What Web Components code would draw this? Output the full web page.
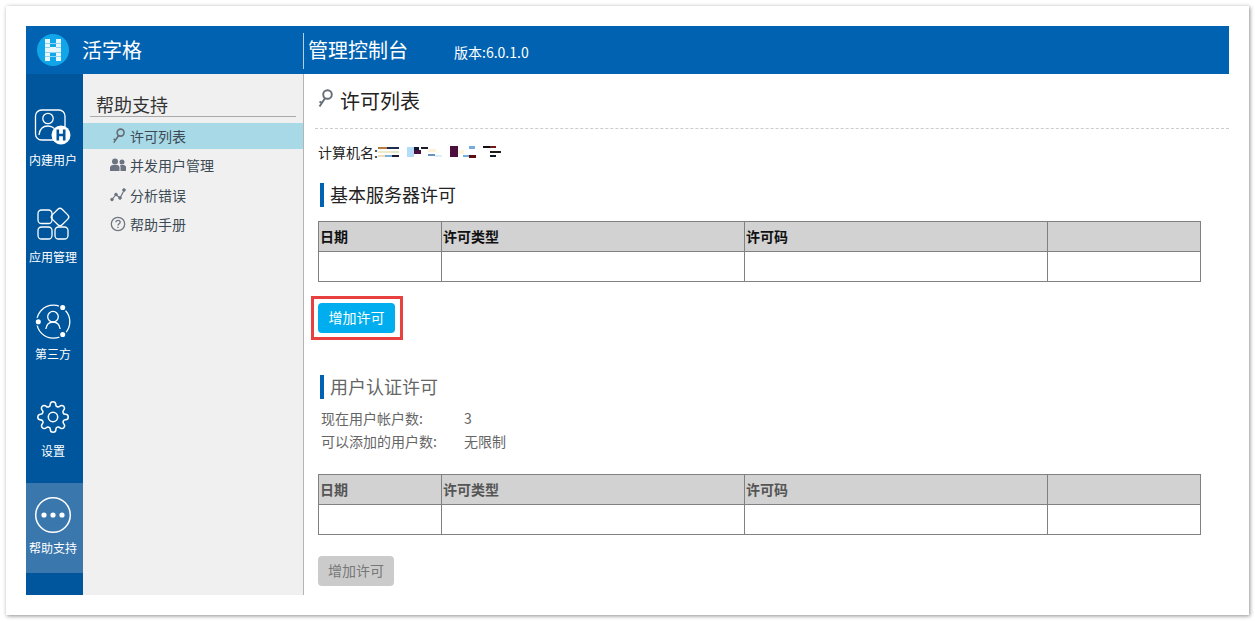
<!DOCTYPE html>
<html lang="zh-CN">
<head>
<meta charset="utf-8">
<title>管理控制台</title>
<style>
    html, body { margin: 0; background: #fff; }
    body { font-family: "Noto Sans CJK SC", "Liberation Sans", sans-serif; }
</style>
</head>
<body>
<console-page>
    <app-header slot="header" product="活字格" title="管理控制台" version="版本:6.0.1.0"></app-header>
    <rail-nav slot="rail">
        <rail-item label="内建用户">
            <svg viewBox="0 0 36 36" fill="none" stroke="#fff" stroke-width="1.3">
                <rect x="0.5" y="2" width="29.5" height="30" rx="6"/>
                <circle cx="13" cy="10.5" r="5.2"/>
                <path d="M4 27c.6-6 4.400-9 9-9 2.500 0 4.600.8 6.200 2.400"/>
                <circle cx="26" cy="27" r="9.500" fill="#fff" stroke="none"/>
                <path d="M22.800 21.500v11M29.200 21.500v11M22.800 27h6.400" stroke="#00569c" stroke-width="2.600"/>
            </svg>
        </rail-item>
        <rail-item label="应用管理">
            <svg viewBox="0 0 36 36" fill="none" stroke="#fff" stroke-width="1.300">
                <rect x="3" y="5" width="14" height="13.500" rx="3.500"/>
                <rect x="18" y="5" width="14" height="14" rx="3" transform="rotate(45 25 12)"/>
                <rect x="3" y="22" width="14" height="12" rx="3.500"/>
                <rect x="20" y="22" width="13" height="12" rx="3.500"/>
            </svg>
        </rail-item>
        <rail-item label="第三方">
            <svg viewBox="0 0 36 36" fill="none" stroke="#fff" stroke-width="1.300">
                <circle cx="18.300" cy="19.700" r="16.500"/>
                <circle cx="18" cy="14.700" r="5.300"/>
                <path d="M10.800 27c.8-5 3.800-7 7.200-7s6.400 2 7.200 7"/>
                <g fill="#fff" stroke="#00569c" stroke-width="1.500">
                    <circle cx="27.700" cy="5.500" r="3.300"/>
                    <circle cx="3.300" cy="19.700" r="3.300"/>
                    <circle cx="27.700" cy="32.500" r="3.300"/>
                </g>
            </svg>
        </rail-item>
        <rail-item label="设置">
            <svg viewBox="-1 -1 26 26" fill="none" stroke="#fff" stroke-width="1.100" style="width:36px;height:36px">
                <circle cx="12" cy="12" r="3.400"/>
                <path d="M19.400 15a1.650 1.650 0 0 0 .33 1.820l.06.06a2 2 0 0 1 0 2.830 2 2 0 0 1-2.830 0l-.06-.06a1.650 1.650 0 0 0-1.820-.33 1.650 1.650 0 0 0-1 1.510V21a2 2 0 0 1-2 2 2 2 0 0 1-2-2v-.09A1.650 1.650 0 0 0 9 19.400a1.650 1.650 0 0 0-1.820.33l-.06.06a2 2 0 0 1-2.830 0 2 2 0 0 1 0-2.830l.06-.06a1.650 1.650 0 0 0 .33-1.820 1.650 1.650 0 0 0-1.510-1H3a2 2 0 0 1-2-2 2 2 0 0 1 2-2h.09A1.650 1.650 0 0 0 4.600 9a1.650 1.650 0 0 0-.33-1.820l-.06-.06a2 2 0 0 1 0-2.830 2 2 0 0 1 2.830 0l.06.06a1.650 1.650 0 0 0 1.820.33H9a1.650 1.650 0 0 0 1-1.510V3a2 2 0 0 1 2-2 2 2 0 0 1 2 2v.09a1.650 1.650 0 0 0 1 1.510 1.650 1.650 0 0 0 1.820-.33l.06-.06a2 2 0 0 1 2.830 0 2 2 0 0 1 0 2.830l-.06.06a1.650 1.650 0 0 0-.33 1.820V9a1.650 1.650 0 0 0 1.510 1H21a2 2 0 0 1 2 2 2 2 0 0 1-2 2h-.09a1.650 1.650 0 0 0-1.510 1z"/>
            </svg>
        </rail-item>
        <rail-item label="帮助支持" active>
            <svg viewBox="0 0 36 36" fill="none" stroke="#fff" stroke-width="1.500">
                <circle cx="18" cy="19" r="17.300"/>
                <g fill="#fff" stroke="none">
                    <circle cx="9" cy="19" r="2.600"/>
                    <circle cx="18" cy="19" r="2.600"/>
                    <circle cx="27" cy="19" r="2.600"/>
                </g>
            </svg>
        </rail-item>
    </rail-nav>
    <side-nav slot="side" heading="帮助支持">
        <nav-item active>
            <svg slot="icon" viewBox="0 0 16 16" fill="none" stroke="#656c76" stroke-width="1.600"><circle cx="10.600" cy="4.600" r="3.500"/><path d="M8.600 7.500 3.800 14.600M5.600 12l-2-1"/></svg>
            许可列表
        </nav-item>
        <nav-item>
            <svg slot="icon" viewBox="0 0 16 16" fill="#6b7480"><circle cx="5" cy="4.500" r="3"/><circle cx="12" cy="5" r="2.500"/><path d="M0 14v-3.500C0 9 1.500 8 3 8h4c1.500 0 2.500 1 2.500 2.500V14zM10.500 14v-4c0-.6-.2-1.200-.5-1.600.4-.2.800-.4 1.500-.4h2C15 8 16 9 16 10v4z"/></svg>
            并发用户管理
        </nav-item>
        <nav-item>
            <svg slot="icon" viewBox="0 0 16 16" fill="#6b7480" stroke="#6b7480"><path d="M2 12.500 6 7.500 10 11 14 3.500" fill="none" stroke-width="1.200"/><circle cx="2" cy="12.500" r="1.300"/><circle cx="6" cy="7.500" r="1.300"/><circle cx="10" cy="11" r="1.300"/><circle cx="14" cy="3" r="1.300"/></svg>
            分析错误
        </nav-item>
        <nav-item>
            <svg slot="icon" viewBox="0 0 16 16" fill="none" stroke="#6f7680" stroke-width="1.300"><circle cx="8" cy="8" r="6.700"/><path d="M5.900 6.300C6 4.900 7 4.300 8.100 4.300c1.200 0 2.100.8 2.100 1.900 0 1.600-2.200 1.700-2.200 3.400"/><path d="M8 10.800v1.300"/></svg>
            帮助手册
        </nav-item>
    </side-nav>
    <license-panel slot="main" heading="许可列表" machine="计算机名:">
        <section-title>基本服务器许可</section-title>
        <license-table></license-table>
        <callout-box><action-button>增加许可</action-button></callout-box>
        <section-title muted class="second">用户认证许可</section-title>
        <stat-list>
            <stat-row label="现在用户帐户数:">3</stat-row>
            <stat-row label="可以添加的用户数:">无限制</stat-row>
        </stat-list>
        <license-table muted class="second"></license-table>
        <action-button disabled class="last">增加许可</action-button>
    </license-panel>
</console-page>

<script>
class BaseElement extends HTMLElement {
    constructor() {
        super();
        this.attachShadow({mode: "open"});
    }
    connectedCallback() {
        this.shadowRoot.innerHTML = `<style>${this.getStyles()}</style>${this.getMarkup()}`;
    }
    getStyles() { return ""; }
    getMarkup() { return "<slot></slot>"; }
}

class ConsolePage extends BaseElement {
    getStyles() {
        return `
            :host {
                display: block;
                box-sizing: border-box;
                width: 1243px;
                height: 609px;
                margin: 6px;
                padding: 20px;
                background: #fff;
                box-shadow: 1px 1px 4px rgba(0,0,0,.45);
                font-family: "Noto Sans CJK SC", "Liberation Sans", sans-serif;
            }
            .app { height: 569px; display: flex; flex-direction: column; overflow: hidden; }
            .body { flex: 1; display: flex; min-height: 0; }
        `;
    }
    getMarkup() {
        return `
            <div class="app">
                <slot name="header"></slot>
                <div class="body">
                    <slot name="rail"></slot>
                    <slot name="side"></slot>
                    <slot name="main"></slot>
                </div>
            </div>
        `;
    }
}

class AppHeader extends BaseElement {
    getStyles() {
        return `
            :host { display: flex; align-items: center; height: 48px; flex: none; background: #0062b1; color: #fff; }
            .logo { width: 32px; height: 32px; margin-left: 11px; flex: none; display: block; }
            .product { width: 221px; margin-left: 13px; font-size: 20px; line-height: 28px; box-sizing: border-box; }
            .title { height: 36px; line-height: 33px; border-left: 1px solid #b5cfe6; padding-left: 4px; font-size: 20px; margin-top: 2px; }
            .version { margin-left: 46px; font-size: 14px; margin-top: 4px; }
        `;
    }
    getMarkup() {
        return `
            <svg class="logo" viewBox="0 0 32 32">
                <circle cx="16" cy="16" r="16" fill="#10a6e8"/>
                <g fill="#e8f6fd">
                    <rect x="8" y="5" width="5" height="22"/>
                    <rect x="19" y="5" width="5" height="22"/>
                    <rect x="13" y="13" width="6" height="6"/>
                </g>
                <g fill="#8fd3f4">
                    <rect x="8" y="9" width="16" height="1"/>
                    <rect x="8" y="13" width="5" height="1"/>
                    <rect x="19" y="13" width="5" height="1"/>
                    <rect x="8" y="18" width="16" height="1"/>
                    <rect x="8" y="22" width="16" height="1"/>
                </g>
            </svg>
            <div class="product">${this.getAttribute("product")}</div>
            <div class="title">${this.getAttribute("title")}</div>
            <div class="version">${this.getAttribute("version")}</div>
        `;
    }
}

class RailNav extends BaseElement {
    getStyles() {
        return `:host { display: flex; flex-direction: column; gap: 7px; width: 57px; flex: none; box-sizing: border-box; padding-top: 21px; background: #00569c; }`;
    }
}

class RailItem extends BaseElement {
    getStyles() {
        return `
            :host {
                display: flex; flex-direction: column; align-items: center;
                box-sizing: border-box; height: 90px; padding: 13px 3px 0 0;
                color: #fff; font-size: 12px;
            }
            :host([active]) { background: #3a77ac; }
            ::slotted(svg) { display: block; width: 36px; height: 36px; overflow: visible; }
            .icon { width: 36px; height: 36px; }
            .label { margin-top: 8px; line-height: 16px; white-space: nowrap; }
        `;
    }
    getMarkup() {
        return `<div class="icon"><slot></slot></div><div class="label">${this.getAttribute("label")}</div>`;
    }
}

class SideNav extends BaseElement {
    getStyles() {
        return `
            :host { display: block; box-sizing: border-box; width: 221px; flex: none; padding-top: 18px; background: #f0f0f0; border-right: 1px solid #b4b4b4; color: #333; }
            .heading { margin: 0 7px; padding-left: 6px; height: 24px; line-height: 25px; font-size: 18px; border-bottom: 1px solid #aaa; }
            .list { margin-top: 6px; display: flex; flex-direction: column; gap: 3.6px; }
        `;
    }
    getMarkup() {
        return `<div class="heading">${this.getAttribute("heading")}</div><div class="list"><slot></slot></div>`;
    }
}

class NavItem extends BaseElement {
    getStyles() {
        return `
            :host { display: flex; align-items: center; box-sizing: border-box; height: 26px; padding: 0 0 1px 27px; font-size: 14px; color: #3c4a55; white-space: nowrap; }
            :host([active]) { background: #a8d9e7; }
            ::slotted(svg) { display: block; width: 16px; height: 16px; }
            .icon { width: 16px; height: 16px; margin-right: 4px; }
        `;
    }
    getMarkup() {
        return `<div class="icon"><slot name="icon"></slot></div><slot></slot>`;
    }
}

class LicensePanel extends BaseElement {
    getStyles() {
        return `
            :host { display: block; flex: 1; min-width: 0; padding-left: 11px; background: #fff; color: #222; }
            .head { display: flex; align-items: center; height: 54px; border-bottom: 1px dashed #ccc; box-sizing: content-box; padding-left: 2px; font-size: 20px; }
            .head svg { width: 16px; height: 20px; margin-right: 7px; margin-top: -5px; }
            .head span { margin-top: -1px; }
            .machine { display: flex; align-items: center; height: 20px; margin: 13px 0 21px 3px; font-size: 14px; }
            .machine svg { width: 124px; height: 12px; display: block; }
            .inner { padding-left: 3px; }
        `;
    }
    getMarkup() {
        return `
            <div class="head">
                <svg viewBox="0 0 16 20" fill="none" stroke="#656c76" stroke-width="1.900"><circle cx="10.500" cy="5.500" r="4.300"/><path d="M8.200 9 2.500 17.500M5 14l-2.500-1.300"/></svg>
                <span>${this.getAttribute("heading")}</span>
            </div>
            <div class="machine">
                <span>${this.getAttribute("machine")}</span>
                <svg viewBox="0 0 124 12" shape-rendering="crispEdges">
                    <rect x="0" y="1" width="9" height="2" fill="#b87a3a"/><rect x="9" y="1" width="12" height="2" fill="#1c2b52"/>
                    <rect x="0" y="5" width="13" height="2" fill="#f2e8c8"/><rect x="13" y="5" width="8" height="2" fill="#dfe8c0"/>
                    <rect x="0" y="9" width="7" height="2" fill="#f0dcb8"/><rect x="7" y="9" width="7" height="2" fill="#7ab0dc"/><rect x="14" y="9" width="7" height="2" fill="#1c1c2e"/>
                    <rect x="29" y="1" width="7" height="10" fill="#b4dcf8"/><rect x="36" y="1" width="5" height="3" fill="#101830"/><rect x="36" y="4" width="7" height="4" fill="#4a1040"/>
                    <rect x="43" y="1" width="7" height="2" fill="#1c1c28"/><rect x="50" y="3" width="8" height="3" fill="#fbf2d8"/><rect x="50" y="8" width="7" height="2" fill="#6a90c0"/>
                    <rect x="57" y="9" width="7" height="2" fill="#d8f0fa"/>
                    <rect x="72" y="0" width="8" height="11" fill="#4a0f3c"/>
                    <rect x="80" y="4" width="6" height="4" fill="#fdf5dc"/><rect x="85" y="9" width="6" height="2" fill="#74acdc"/><rect x="91" y="0" width="6" height="3" fill="#74acdc"/><rect x="91" y="9" width="7" height="3" fill="#5a1010"/>
                    <rect x="105" y="0" width="7" height="2" fill="#101010"/><rect x="112" y="0" width="6" height="2" fill="#701818"/><rect x="112" y="5" width="11" height="2" fill="#1c1c1c"/><rect x="112" y="9" width="6" height="2" fill="#101828"/>
                </svg>
            </div>
            <div class="inner"><slot></slot></div>
        `;
    }
}

class SectionTitle extends BaseElement {
    getStyles() {
        return `
            :host { display: block; margin-left: 2px; height: 24px; padding-left: 6px; border-left: 4px solid #0062b1; font-size: 18px; line-height: 22px; color: #222; }
            :host([muted]) { color: #666; }
            :host(.second) { margin-top: 35px; }
        `;
    }
}

class LicenseTable extends BaseElement {
    getStyles() {
        return `
            :host { display: block; width: 883px; margin-top: 14px; color: #111; }
            :host([muted]) { color: #555; }
            :host(.second) { margin-top: 21px; }
            table { border-collapse: collapse; table-layout: fixed; width: 883px; font-size: 14px; }
            th, td { border: 1px solid #808080; height: 27px; line-height: 18px; padding: 0 1px 2px; text-align: left; box-sizing: content-box; }
            th { background: #d2d2d2; font-weight: 700; }
        `;
    }
    getMarkup() {
        return `
            <table>
                <colgroup><col style="width:123px"><col style="width:303px"><col style="width:303px"><col style="width:153px"></colgroup>
                <tr><th>日期</th><th>许可类型</th><th>许可码</th><th></th></tr>
                <tr><td></td><td></td><td></td><td></td></tr>
            </table>
        `;
    }
}

class CalloutBox extends BaseElement {
    getStyles() {
        return `:host { display: block; width: fit-content; margin: 14px 0 0 -7px; padding: 4px 5px 4px 4px; border: 3px solid #e8403f; }`;
    }
}

class ActionButton extends BaseElement {
    getStyles() {
        return `
            :host { display: flex; align-items: center; justify-content: center; box-sizing: border-box; width: 77px; height: 30px; padding-bottom: 2px; border-radius: 4px; background: #00aeef; color: #fff; font-size: 14px; }
            :host([disabled]) { width: 76px; background: #cbcbcb; color: #777; }
            :host(.last) { margin-top: 21px; }
        `;
    }
}

class StatList extends BaseElement {
    getStyles() {
        return `:host { display: block; margin: 8px 0 0 3px; font-size: 14px; line-height: 23px; color: #666; }`;
    }
}

class StatRow extends BaseElement {
    getStyles() {
        return `
            :host { display: flex; height: 23px; }
            .label { width: 143px; flex: none; }
        `;
    }
    getMarkup() {
        return `<div class="label">${this.getAttribute("label")}</div><div><slot></slot></div>`;
    }
}

customElements.define("console-page", ConsolePage);
customElements.define("app-header", AppHeader);
customElements.define("rail-nav", RailNav);
customElements.define("rail-item", RailItem);
customElements.define("side-nav", SideNav);
customElements.define("nav-item", NavItem);
customElements.define("license-panel", LicensePanel);
customElements.define("section-title", SectionTitle);
customElements.define("license-table", LicenseTable);
customElements.define("callout-box", CalloutBox);
customElements.define("action-button", ActionButton);
customElements.define("stat-list", StatList);
customElements.define("stat-row", StatRow);
</script>
</body>
</html>
